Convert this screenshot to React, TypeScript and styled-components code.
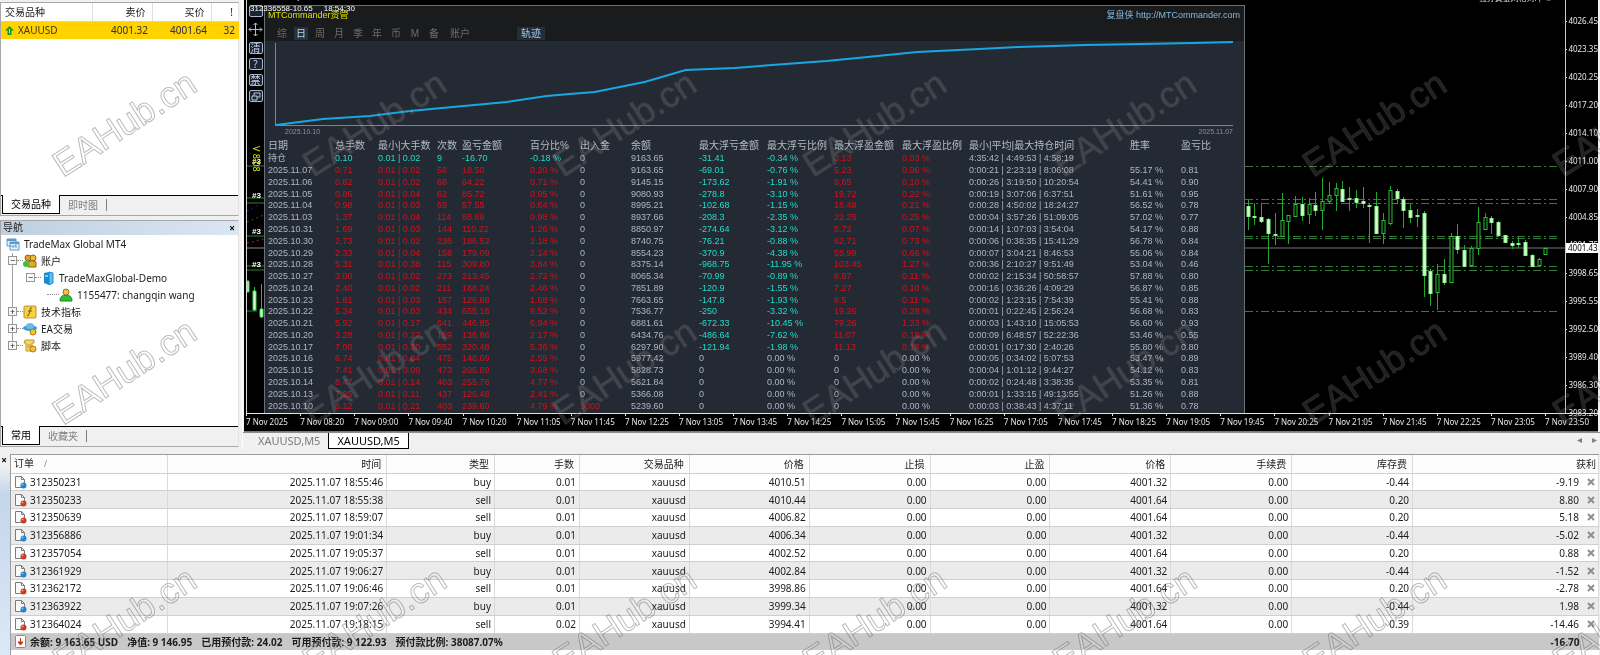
import { ReactNode } from "react";
import styled, { createGlobalStyle } from "styled-components";

type Tone = "gray" | "cyan" | "red";

const statHeaders = [
  "日期",
  "总手数",
  "最小|大手数",
  "次数",
  "盈亏金额",
  "百分比%",
  "出入金",
  "余额",
  "最大浮亏金额",
  "最大浮亏比例",
  "最大浮盈金额",
  "最大浮盈比例",
  "最小|平均|最大持仓时间",
  "胜率",
  "盈亏比",
];

const statWidths = [67, 43, 59, 25, 68, 50, 51, 68, 68, 67, 68, 67, 161, 51, 63];

// date, lots, max lot, count, profit, percent, deposit, balance, dd, dd%, up, up%, times, win rate, ratio
const statRows: string[][] = [
  ["持仓", "0.10", "0.02", "9", "-16.70", "-0.18", "0", "9163.65", "-31.41", "-0.34", "3.13", "0.03", "4:35:42 | 4:49:53 | 4:58:19", "", ""],
  ["2025.11.07", "0.71", "0.02", "58", "18.50", "0.20", "0", "9163.65", "-69.01", "-0.76", "5.23", "0.06", "0:00:21 | 2:23:19 | 8:06:08", "55.17 %", "0.81"],
  ["2025.11.06", "0.82", "0.02", "68", "64.22", "0.71", "0", "9145.15", "-173.62", "-1.91", "8.65", "0.10", "0:00:26 | 3:19:50 | 10:20:54", "54.41 %", "0.90"],
  ["2025.11.05", "0.86", "0.04", "62", "85.72", "0.95", "0", "9080.93", "-278.8", "-3.10", "19.72", "0.22", "0:00:19 | 3:07:06 | 6:37:51", "51.61 %", "0.95"],
  ["2025.11.04", "0.98", "0.03", "69", "57.55", "0.64", "0", "8995.21", "-102.68", "-1.15", "18.48", "0.21", "0:00:28 | 4:50:02 | 18:24:27", "56.52 %", "0.78"],
  ["2025.11.03", "1.37", "0.04", "114", "86.69", "0.98", "0", "8937.66", "-208.3", "-2.35", "22.25", "0.25", "0:00:04 | 3:57:26 | 51:09:05", "57.02 %", "0.77"],
  ["2025.10.31", "1.69", "0.03", "144", "110.22", "1.26", "0", "8850.97", "-274.64", "-3.12", "5.72", "0.07", "0:00:14 | 1:07:03 | 3:54:04", "54.17 %", "0.88"],
  ["2025.10.30", "2.73", "0.02", "236", "186.52", "2.18", "0", "8740.75", "-76.21", "-0.88", "62.71", "0.73", "0:00:06 | 0:38:35 | 15:41:29", "56.78 %", "0.84"],
  ["2025.10.29", "2.33", "0.04", "158", "179.09", "2.14", "0", "8554.23", "-370.9", "-4.38", "55.99", "0.66", "0:00:07 | 3:04:21 | 8:46:53", "55.06 %", "0.84"],
  ["2025.10.28", "5.31", "0.38", "115", "309.80", "3.84", "0", "8375.14", "-968.75", "-11.95", "103.45", "1.27", "0:00:36 | 2:10:27 | 9:51:49", "53.04 %", "0.46"],
  ["2025.10.27", "3.00", "0.02", "273", "213.45", "2.72", "0", "8065.34", "-70.99", "-0.89", "8.87", "0.11", "0:00:02 | 2:15:34 | 50:58:57", "57.88 %", "0.80"],
  ["2025.10.24", "2.40", "0.02", "211", "188.24", "2.46", "0", "7851.89", "-120.9", "-1.55", "7.27", "0.10", "0:00:16 | 0:36:26 | 4:09:29", "56.87 %", "0.85"],
  ["2025.10.23", "1.81", "0.03", "157", "126.88", "1.68", "0", "7663.65", "-147.8", "-1.93", "8.5", "0.11", "0:00:02 | 1:23:15 | 7:54:39", "55.41 %", "0.88"],
  ["2025.10.22", "5.34", "0.03", "434", "655.16", "9.52", "0", "7536.77", "-250", "-3.32", "19.26", "0.28", "0:00:01 | 0:22:45 | 2:56:24", "56.68 %", "0.83"],
  ["2025.10.21", "5.92", "0.17", "641", "446.85", "6.94", "0", "6881.61", "-672.33", "-10.45", "79.26", "1.23", "0:00:03 | 1:43:10 | 15:05:53", "56.60 %", "0.93"],
  ["2025.10.20", "3.28", "0.27", "159", "136.86", "2.17", "0", "6434.76", "-486.64", "-7.62", "11.07", "0.18", "0:00:09 | 6:48:57 | 52:22:36", "53.46 %", "0.55"],
  ["2025.10.17", "7.00", "0.30", "552", "320.48", "5.36", "0", "6297.90", "-121.94", "-1.98", "11.13", "0.18", "0:00:01 | 0:17:30 | 2:40:26", "55.80 %", "0.80"],
  ["2025.10.16", "6.74", "0.04", "475", "148.69", "2.55", "0", "5977.42", "0", "0.00", "0", "0.00", "0:00:05 | 0:34:02 | 5:07:53", "53.47 %", "0.89"],
  ["2025.10.15", "7.41", "0.09", "473", "206.89", "3.68", "0", "5828.73", "0", "0.00", "0", "0.00", "0:00:04 | 1:01:12 | 9:44:27", "54.12 %", "0.83"],
  ["2025.10.14", "8.47", "0.14", "463", "255.76", "4.77", "0", "5621.84", "0", "0.00", "0", "0.00", "0:00:02 | 0:24:48 | 3:38:35", "53.35 %", "0.81"],
  ["2025.10.13", "7.25", "0.11", "437", "126.48", "2.41", "0", "5366.08", "0", "0.00", "0", "0.00", "0:00:01 | 1:33:15 | 49:13:55", "51.26 %", "0.88"],
  ["2025.10.10", "6.12", "0.21", "403", "239.60", "4.79", "5000", "5239.60", "0", "0.00", "0", "0.00", "0:00:03 | 0:38:43 | 4:37:11", "51.36 %", "0.78"],
];

const formatStat = (value: string, col: number) => {
  if (col === 2) return `0.01 | ${value}`;
  if (col === 5 || col === 9 || col === 11) return `${value} %`;
  return value;
};

const statTone = (value: string, col: number, row: number): Tone => {
  if (col >= 1 && col <= 5) return row === 0 ? "cyan" : "red";
  if (col === 6) return value === "0" ? "gray" : "red";
  if (col === 8 || col === 9) return Number(value) < 0 ? "cyan" : "gray";
  if (col === 10 || col === 11) return Number(value) > 0 ? "red" : "gray";
  return "gray";
};

const orderHeaders = ["订单", "时间", "类型", "手数", "交易品种", "价格", "止损", "止盈", "价格", "手续费", "库存费", "获利"];
const orderWidths = [157, 219, 108, 85, 110, 120, 121, 120, 121, 121, 121, 186];

const orders = [
  { id: "312350231", time: "2025.11.07 18:55:46", type: "buy", lots: "0.01", open: "4010.51", price: "4001.32", swap: "-0.44", profit: "-9.19" },
  { id: "312350233", time: "2025.11.07 18:55:38", type: "sell", lots: "0.01", open: "4010.44", price: "4001.64", swap: "0.20", profit: "8.80" },
  { id: "312350639", time: "2025.11.07 18:59:07", type: "sell", lots: "0.01", open: "4006.82", price: "4001.64", swap: "0.20", profit: "5.18" },
  { id: "312356886", time: "2025.11.07 19:01:34", type: "buy", lots: "0.01", open: "4006.34", price: "4001.32", swap: "-0.44", profit: "-5.02" },
  { id: "312357054", time: "2025.11.07 19:05:37", type: "sell", lots: "0.01", open: "4002.52", price: "4001.64", swap: "0.20", profit: "0.88" },
  { id: "312361929", time: "2025.11.07 19:06:27", type: "buy", lots: "0.01", open: "4002.84", price: "4001.32", swap: "-0.44", profit: "-1.52" },
  { id: "312362172", time: "2025.11.07 19:06:46", type: "sell", lots: "0.01", open: "3998.86", price: "4001.64", swap: "0.20", profit: "-2.78" },
  { id: "312363922", time: "2025.11.07 19:07:26", type: "buy", lots: "0.01", open: "3999.34", price: "4001.32", swap: "-0.44", profit: "1.98" },
  { id: "312364024", time: "2025.11.07 19:18:15", type: "sell", lots: "0.02", open: "3994.41", price: "4001.64", swap: "0.39", profit: "-14.46" },
];

const priceLabels = [
  "4026.45", "4023.35", "4020.25", "4017.20", "4014.10", "4011.00", "4007.90", "4004.85",
  "4001.75", "3998.65", "3995.55", "3992.50", "3989.40", "3986.30", "3983.20",
];

const timeLabels = [
  "2025", "08:20", "09:00", "09:40", "10:20", "11:05", "11:45", "12:25", "13:05", "13:45", "14:25", "15:05", "15:45",
  "16:25", "17:05", "17:45", "18:25", "19:05", "19:45", "20:25", "21:05", "21:45", "22:25", "23:05", "23:50",
];

// high, low, body top, body bottom (thirds of a pixel), 1 = falling candle
const candles = [
  [210, 300, 228, 257, 1], [220, 285, 258, 261, 1], [218, 280, 260, 273, 1], [265, 402, 266, 308, 1],
  [250, 345, 312, 316, 1], [190, 320, 270, 318, 0], [255, 342, 256, 275, 0], [198, 262, 222, 257, 0],
  [200, 272, 221, 253, 1], [205, 282, 222, 253, 0], [187, 258, 225, 240, 1], [145, 300, 213, 241, 0],
  [155, 222, 195, 212, 0], [160, 242, 175, 197, 0], [153, 215, 176, 213, 1], [170, 242, 205, 209, 1],
  [180, 233, 205, 216, 1], [170, 233, 214, 221, 1], [220, 338, 226, 230, 1], [187, 310, 228, 308, 1],
  [248, 342, 270, 308, 0], [168, 285, 180, 278, 0], [178, 222, 184, 206, 1], [200, 293, 207, 239, 1],
  [222, 278, 240, 261, 1], [237, 290, 254, 257, 1], [242, 502, 250, 437, 1], [418, 528, 424, 491, 1],
  [402, 540, 433, 487, 0], [388, 465, 432, 456, 1], [310, 460, 319, 456, 0], [282, 372, 318, 358, 1],
  [345, 410, 360, 407, 1], [348, 412, 354, 404, 0], [232, 375, 277, 354, 0], [248, 300, 262, 298, 0],
  [258, 312, 263, 275, 1], [272, 322, 275, 314, 1], [314, 338, 316, 336, 1], [332, 358, 338, 344, 1],
  [322, 355, 340, 343, 1], [330, 378, 336, 374, 1], [372, 410, 374, 407, 1], [385, 412, 386, 405, 0],
  [350, 372, 353, 371, 0],
];

const levels = [166, 199, 203, 236, 238, 266, 270, 311];

const GlobalStyle = createGlobalStyle`
  * {
    box-sizing: border-box;
  }
  body {
    margin: 0;
    background: #f0f0f0;
    font-family: "Noto Sans", "Noto Sans CJK SC", sans-serif;
    font-size: 10px;
    line-height: 12px;
    color: #1c1c1c;
    overflow-x: hidden;
  }
  button {
    font: inherit;
    color: inherit;
    border: 0;
    padding: 0;
    margin: 0;
    background: none;
    white-space: nowrap;
  }
  table {
    border-collapse: collapse;
    border-spacing: 0;
  }
`;

// The fill shows on dark areas only, the outline on light areas only
function Watermark({ outline }: { outline?: boolean }) {
  const id = outline ? "mark-outline" : "mark-fill";
  return (
    <WatermarkLayer aria-hidden="true" $outline={outline}>
      <defs>
        <pattern id={id} width="250" height="248" patternUnits="userSpaceOnUse">
          <text
            transform="translate(63 178) rotate(-33)"
            fontFamily="Liberation Sans, sans-serif"
            fontSize="36"
            fill={outline ? "none" : "#ffffff"}
            fillOpacity="0.12"
            stroke={outline ? "#bcbcbc" : "#ffffff"}
            strokeOpacity={outline ? 1 : 0.12}
            strokeWidth="1"
          >
            EAHub.cn
          </text>
        </pattern>
      </defs>
      <rect width="100%" height="100%" fill={`url(#${id})`} />
    </WatermarkLayer>
  );
}

function TreeItem({ depth, toggle, icon, children }: { depth: number; toggle?: string; icon: ReactNode; children: ReactNode }) {
  return (
    <StyledTreeItem $depth={depth}>
      {toggle && <TreeToggle aria-label={toggle === "+" ? "展开" : "折叠"}>{toggle}</TreeToggle>}
      {depth > 0 && <TreeDash $long={!toggle} />}
      <svg width="14" height="14" viewBox="0 0 14 14">{icon}</svg>
      <span>{children}</span>
    </StyledTreeItem>
  );
}

function MarketWatch() {
  return (
    <MarketPanel>
      <MarketTable>
        <colgroup>
          <col style={{ width: 91 }} />
          <col style={{ width: 60 }} />
          <col style={{ width: 59 }} />
          <col style={{ width: 28 }} />
        </colgroup>
        <thead>
          <tr>
            <th>交易品种</th>
            <th>卖价</th>
            <th>买价</th>
            <th>!</th>
          </tr>
        </thead>
        <tbody>
          <tr>
            <td>
              <SymbolCell>
                <svg width="9" height="9" viewBox="0 0 9 9">
                  <path d="M4.5 0 9 4.500H6.500V9h-4V4.500H0Z" fill="#159a2c" />
                  <path d="M4.500 3v4" stroke="#b8f0a8" fill="none" />
                </svg>
                XAUUSD
              </SymbolCell>
            </td>
            <td>4001.32</td>
            <td>4001.64</td>
            <td>32</td>
          </tr>
        </tbody>
      </MarketTable>
      <PanelSpace />
      <TabBar>
        <PanelTab $active>交易品种</PanelTab>
        <PanelTab>即时图</PanelTab>
      </TabBar>
    </MarketPanel>
  );
}

function Navigator() {
  return (
    <NavPanel>
      <NavTitle>
        导航
        <CloseButton aria-label="关闭">×</CloseButton>
      </NavTitle>
      <Tree>
        <TreeItem
          depth={0}
          icon={
            <>
              <path d="M1 2h9v7H1zM4 5h9v8H4z" fill="#e8f3fc" stroke="#5b9bd0" />
              <path d="M1 3h9M4 6h9" stroke="#5b9bd0" strokeWidth="2" />
              <path d="M6 10h2M9 10h2" stroke="#5b9bd0" />
            </>
          }
        >
          TradeMax Global MT4
        </TreeItem>
        <TreeItem
          depth={1}
          toggle="−"
          icon={
            <>
              <circle cx="5" cy="4" r="3" fill="#e0a020" stroke="#8a6410" />
              <circle cx="10" cy="4" r="3" fill="#f0b838" stroke="#8a6410" />
              <path d="M5 13V8q4-3 8 0v5z" fill="#e0a828" stroke="#8a6410" />
              <circle cx="3" cy="10" r="3" fill="#38c048" />
            </>
          }
        >
          账户
        </TreeItem>
        <TreeItem
          depth={2}
          toggle="−"
          icon={
            <>
              <path d="M3 2l5-1v13l-5-2z" fill="#1e88d0" />
              <path d="M8 1l4 1v10l-4 2z" fill="#5cc0f0" stroke="#1e88d0" />
              <path d="M4 5h3" stroke="#fff" />
            </>
          }
        >
          TradeMaxGlobal-Demo
        </TreeItem>
        <TreeItem
          depth={3}
          icon={
            <>
              <path d="M1 13q0-6 6-6t6 6z" fill="#2cc030" stroke="#128a18" />
              <circle cx="7" cy="4" r="3" fill="#f0c060" stroke="#a86a18" />
            </>
          }
        >
          1155477: changqin wang
        </TreeItem>
        <TreeItem
          depth={1}
          toggle="+"
          icon={
            <>
              <rect x="1" y="1" width="12" height="12" rx="1" fill="#f6cf4a" stroke="#c09020" />
              <path d="M9 3q-2-1-2 2l-1 4q0 2-2 2M5 6h4" stroke="#7a5810" fill="none" />
            </>
          }
        >
          技术指标
        </TreeItem>
        <TreeItem
          depth={1}
          toggle="+"
          icon={
            <>
              <ellipse cx="7" cy="6" rx="7" ry="3" fill="#3c9ad8" />
              <ellipse cx="7" cy="4" rx="4" ry="3" fill="#68bcec" />
              <circle cx="10" cy="10" r="3" fill="#f0c040" stroke="#a87c10" />
            </>
          }
        >
          EA交易
        </TreeItem>
        <TreeItem
          depth={1}
          toggle="+"
          icon={
            <>
              <path d="M2 1h9v3H9v8H3V4H1z" fill="#f6d468" stroke="#c09828" />
              <path d="M4 6h4M4 8h4" stroke="#c09828" />
              <circle cx="10" cy="10" r="3" fill="#f0c040" stroke="#a87c10" />
            </>
          }
        >
          脚本
        </TreeItem>
      </Tree>
      <TabBar>
        <PanelTab $active>常用</PanelTab>
        <PanelTab>收藏夹</PanelTab>
      </TabBar>
    </NavPanel>
  );
}

function ToolStrip() {
  return (
    <Strip>
      <StripChart viewBox="0 0 17 414">
        <path d="M0 166h17M0 198h17M0 203h17M0 236h17M0 266h17M0 270h17M0 311h10" stroke="#2f7f35" />
        <path d="M0 248h17" stroke="#8c8c92" />
        <path d="M0 222l17-7M0 243l17-4" stroke="#a02040" strokeDasharray="2 3" />
        <path d="M0 211l17-9" stroke="#2020a0" strokeDasharray="2 3" />
        <path d="M7.5 287v24M14.5 284v34" stroke="#20c030" />
        <path d="M0 281h2v11H0zM6 291h3v19H6zM13 309h3v8h-3z" fill="#d8ffd8" stroke="#38e048" />
        <g fill="#ffffff" fontFamily="Liberation Sans, sans-serif" fontSize="8" fontWeight="700">
          <text x="5" y="164">#3</text>
          <text x="5" y="198">#3</text>
          <text x="5" y="234">#3</text>
          <text x="5" y="267">#3</text>
        </g>
      </StripChart>
      <ToolButton aria-label="最小化" />
      <MoveButton aria-label="移动">
        <svg width="15" height="15" viewBox="0 0 15 15">
          <path d="M7.5 1v13M1 7.5h13M5.5 3l2-2 2 2M5.5 12l2 2 2-2M3 5.5l-2 2 2 2M12 5.5l2 2-2 2" stroke="#b4bcc8" fill="none" />
        </svg>
      </MoveButton>
      <ToolButton>清</ToolButton>
      <ToolButton>?</ToolButton>
      <ToolButton>禁</ToolButton>
      <ToolButton aria-label="还原">
        <svg width="10" height="9" viewBox="0 0 10 9">
          <path d="M1 4h5v4H1zM3 4V1h6v4H6" stroke="#b8c8e0" fill="none" />
        </svg>
      </ToolButton>
      <Version>V 8.08</Version>
    </Strip>
  );
}

function StatsPanel() {
  return (
    <StatsWindow>
      <StatsHeader>
        <StatsTitle>
          <Brand>MTCommander资管</Brand>
          <SiteLink href="http://MTCommander.com">复盘侠 http://MTCommander.com</SiteLink>
        </StatsTitle>
        <StatsMenu>
          {["综", "日", "周", "月", "季", "年", "币", "M", "备"].map((name) => (
            <MenuButton key={name} $active={name === "日"}>{name}</MenuButton>
          ))}
          <MenuButton $wide>账户</MenuButton>
          <TraceButton>轨迹</TraceButton>
        </StatsMenu>
      </StatsHeader>
      <CurveChart viewBox="0 0 980 86" preserveAspectRatio="none">
        <path d="M10.5 2v83M10 84.500h959" stroke="#80868e" fill="none" />
        <path
          d="M11 84 58 78 105 75 145 70 188 66 242 61 282 55 305 53 330 51 380 41 421 29 470 27 521 23 562 20 603 16 653 11 715 8 755 6 821 4 878 3 929 2 969 1"
          stroke="#16a8e4"
          strokeWidth="2"
          fill="none"
        />
      </CurveChart>
      <CurveDates>
        <span>2025.10.10</span>
        <span>2025.11.07</span>
      </CurveDates>
      <StatsTable>
        <colgroup>
          {statWidths.map((w, i) => (
            <col key={i} style={{ width: `${(w / 976) * 100}%` }} />
          ))}
        </colgroup>
        <thead>
          <tr>
            {statHeaders.map((h) => (
              <th key={h}>{h}</th>
            ))}
          </tr>
        </thead>
        <tbody>
          {statRows.map((row, r) => (
            <tr key={row[0]}>
              {row.map((value, c) => (
                <StatCell key={c} $tone={statTone(value, c, r)}>
                  {formatStat(value, c)}
                </StatCell>
              ))}
            </tr>
          ))}
        </tbody>
      </StatsTable>
    </StatsWindow>
  );
}

function CandleChart() {
  return (
    <CandleWrapper>
      <AdvisorName>强分黄金网格对冲 ☺</AdvisorName>
      <svg width="320" height="414" viewBox="0 0 320 414">
        {levels.map((y) => (
          <path key={y} d={`M0 ${y}.5h315`} stroke="#3a7a3c" strokeDasharray="8 3 2 3" />
        ))}
        <path d="M0 248h320" stroke="#77777c" />
        {candles.map(([high, low, top, bottom, falling], i) => {
          const x = Math.round(2.7 + i * 6.766);
          const y = 130 + Math.round(top / 3);
          const h = Math.max(1, Math.round((bottom - top) / 3));
          return (
            <g key={i}>
              <path d={`M${x + 0.5} ${130 + Math.round(high / 3)}V${130 + Math.round(low / 3)}`} stroke="#22a82c" />
              <rect
                x={x - 1}
                y={y + 0.5}
                width="3"
                height={h}
                fill={falling ? "#d0ffc8" : "#000000"}
                stroke={falling ? "#8cf48c" : "#2cc038"}
              />
            </g>
          );
        })}
      </svg>
    </CandleWrapper>
  );
}

function OrderIcon({ type }: { type: string }) {
  const color = type === "buy" ? "#1e86d0" : "#cc3a22";
  return (
    <svg width="13" height="14" viewBox="0 0 13 14">
      <path d="M1.500 1.500h6l3 3v8h-9z" fill="#fbfbfb" stroke="#7c7c7c" />
      <path d="M7.500 1.500v3h3" fill="none" stroke="#7c7c7c" />
      <circle cx="9.500" cy="10.500" r="3" fill={color} />
      <circle cx="8.500" cy="9.500" r="1" fill="#ffffff" fillOpacity="0.5" />
    </svg>
  );
}

function Terminal() {
  return (
    <TerminalSection>
      <TerminalSide>
        <CloseButton aria-label="关闭">×</CloseButton>
      </TerminalSide>
      <TerminalBody>
        <OrdersTable>
          <colgroup>
            {orderWidths.map((w, i) => (
              <col key={i} style={{ width: `${(w / 1589) * 100}%` }} />
            ))}
          </colgroup>
          <thead>
            <tr>
              {orderHeaders.map((h, i) => (
                <th key={i}>
                  {h}
                  {i === 0 && <SortMark>/</SortMark>}
                </th>
              ))}
            </tr>
          </thead>
          <tbody>
            {orders.map((o) => (
              <tr key={o.id}>
                <td>
                  <OrderCell>
                    <OrderIcon type={o.type} />
                    {o.id}
                  </OrderCell>
                </td>
                <td>{o.time}</td>
                <td>{o.type}</td>
                <td>{o.lots}</td>
                <td>xauusd</td>
                <td>{o.open}</td>
                <td>0.00</td>
                <td>0.00</td>
                <td>{o.price}</td>
                <td>0.00</td>
                <td>{o.swap}</td>
                <td>
                  <ProfitCell>
                    {o.profit}
                    <OrderClose aria-label={`平仓 ${o.id}`}>
                      <svg width="8" height="8" viewBox="0 0 8 8">
                        <path d="M1 1l6 6M7 1L1 7" stroke="#8e8e8e" strokeWidth="2" />
                      </svg>
                    </OrderClose>
                  </ProfitCell>
                </td>
              </tr>
            ))}
          </tbody>
          <tfoot>
            <tr>
              <td colSpan={11}>
                <OrderCell>
                  <svg width="13" height="13" viewBox="0 0 13 13">
                    <rect x="1.500" y="0.500" width="10" height="12" rx="1" fill="#ffffff" stroke="#8a8a8a" />
                    <path d="M6.500 3v7M4 7l2.500 3L9 7z" stroke="#c83018" fill="#c83018" />
                  </svg>
                  <SummaryText>
                    <span>余额: 9 163.65 USD</span>
                    <span>净值: 9 146.95</span>
                    <span>已用预付款: 24.02</span>
                    <span>可用预付款: 9 122.93</span>
                    <span>预付款比例: 38087.07%</span>
                  </SummaryText>
                </OrderCell>
              </td>
              <td>
                <ProfitTotal>-16.70</ProfitTotal>
              </td>
            </tr>
          </tfoot>
        </OrdersTable>
      </TerminalBody>
    </TerminalSection>
  );
}

export default function App() {
  return (
    <>
      <GlobalStyle />
      <Page>
        <Upper>
          <SideColumn>
            <MarketWatch />
            <Navigator />
          </SideColumn>
          <ChartColumn>
            <ChartWindow>
              <ChartCaption>XAUUSD,M5</ChartCaption>
              <OrderTag>
                <span>312336558-10.65</span>
                <span>18:54:30</span>
              </OrderTag>
              <PlotRow>
                <ToolStrip />
                <StatsPanel />
                <CandleChart />
                <PriceAxis>
                  {priceLabels.map((p) => (
                    <PriceLabel key={p}>{p}</PriceLabel>
                  ))}
                  <BidTag>4001.43</BidTag>
                </PriceAxis>
              </PlotRow>
              <TimeAxis>
                {timeLabels.map((t) => (
                  <TimeLabel key={t}>7 Nov {t}</TimeLabel>
                ))}
              </TimeAxis>
            </ChartWindow>
            <ChartTabs>
              <ChartTab>XAUUSD,M5</ChartTab>
              <ChartTab $active>XAUUSD,M5</ChartTab>
              <TabArrows>
                <button aria-label="向左">◂</button>
                <button aria-label="向右">▸</button>
              </TabArrows>
            </ChartTabs>
          </ChartColumn>
        </Upper>
        <Terminal />
        <Watermark />
        <Watermark outline />
      </Page>
    </>
  );
}

// Page frame
const Page = styled.div`
  position: relative;
  display: flex;
  flex-direction: column;
  min-height: 100vh;
  overflow: hidden;
  background: #f0f0f0;
`;

const Upper = styled.div`
  display: flex;
  height: 449px;
`;

const WatermarkLayer = styled.svg<{ $outline?: boolean }>`
  position: absolute;
  inset: 0;
  width: 100%;
  height: 100%;
  pointer-events: none;
  mix-blend-mode: ${({ $outline }) => ($outline ? "multiply" : "normal")};
`;

// Left column
const SideColumn = styled.div`
  display: flex;
  flex-direction: column;
  gap: 4px;
  width: 243px;
  flex-shrink: 0;
  padding: 2px 3px 2px 0;
  border-right: 1px solid #ffffff;
`;

const MarketPanel = styled.div`
  display: flex;
  flex-direction: column;
  height: 214px;
  border: 1px solid #a8a8a8;
  border-right-color: #e4e4e4;
  background: #ffffff;
`;

const NavPanel = styled(MarketPanel)`
  flex: 1;
`;

const MarketTable = styled.table`
  table-layout: fixed;
  width: 100%;
  th,
  td {
    height: 18px;
    padding: 0 6px 0 0;
    font-weight: 400;
    text-align: right;
  }
  th {
    border-right: 1px solid #dedede;
    border-bottom: 1px solid #d0d0d0;
  }
  th:first-child,
  td:first-child {
    padding-left: 4px;
    text-align: left;
  }
  th:last-child {
    border-right: 0;
  }
  td {
    color: #2c2c50;
    background: #ffd200;
    padding-right: 4px;
  }
`;

const SymbolCell = styled.div`
  display: flex;
  align-items: center;
  gap: 4px;
  color: #403820;
`;

const PanelSpace = styled.div`
  flex: 1;
`;

const TabBar = styled.div`
  display: flex;
  align-items: center;
  height: 20px;
  padding: 0 0 1px 1px;
  background: #f0f0f0;
  border-top: 1px solid #000000;
`;

const PanelTab = styled.button<{ $active?: boolean }>`
  height: 19px;
  margin-top: -1px;
  padding: 0 8px;
  color: ${({ $active }) => ($active ? "#000000" : "#808080")};
  background: ${({ $active }) => ($active ? "#ffffff" : "transparent")};
  border: ${({ $active }) => ($active ? "1px solid #000000" : "0")};
  border-top: 0;
  & + & {
    height: 12px;
    border-right: 1px solid #808080;
  }
`;

const NavTitle = styled.div`
  display: flex;
  justify-content: space-between;
  height: 14px;
  padding: 0 2px;
  background: linear-gradient(90deg, #bfcfdf, #dbe6f3);
`;

const CloseButton = styled.button`
  width: 8px;
  font-weight: 700;
  color: #000000;
`;

const Tree = styled.ul`
  flex: 1;
  margin: 0;
  padding: 0;
  list-style: none;
  background: linear-gradient(#a0a0a0, #a0a0a0) 11px 18px / 1px 88px no-repeat;
`;

const StyledTreeItem = styled.li<{ $depth: number }>`
  display: flex;
  align-items: center;
  height: 17px;
  padding-left: ${({ $depth }) => [5, 7, 25, 46][$depth]}px;
  span {
    margin-left: 4px;
  }
`;

const TreeToggle = styled.button`
  width: 9px;
  height: 9px;
  border: 1px solid #969696;
  background: #f8f8f8;
  font-size: 9px;
  line-height: 7px;
`;

const TreeDash = styled.i<{ $long: boolean }>`
  width: ${({ $long }) => ($long ? 12 : 6)}px;
  border-top: 1px dotted #8c8c8c;
`;

// Chart window
const ChartColumn = styled.div`
  display: flex;
  flex-direction: column;
  flex: 1;
  min-width: 0;
`;

const ChartWindow = styled.div`
  position: relative;
  margin: 0 2px 0 1px;
  padding-left: 2px;
  background: #000000;
  border-bottom: 1px solid #7a7a7a;
  overflow: hidden;
`;

const ChartCaption = styled.div`
  position: absolute;
  top: -10px;
  left: 14px;
  color: #ffffff;
`;

const OrderTag = styled.div`
  position: absolute;
  top: 3px;
  left: 6px;
  z-index: 1;
  display: flex;
  gap: 11px;
  font-family: "Liberation Sans", sans-serif;
  font-size: 8px;
  color: #ffffff;
`;

const PlotRow = styled.div`
  display: flex;
  height: 414px;
  border-left: 1px solid #d8d8d8;
  border-bottom: 1px solid #e4e4e4;
`;

const Strip = styled.div`
  position: relative;
  display: flex;
  flex-direction: column;
  align-items: center;
  gap: 4px;
  width: 17px;
  padding-top: 5px;
  flex-shrink: 0;
`;

const StripChart = styled.svg`
  position: absolute;
  inset: 0;
  width: 17px;
  height: 414px;
`;

const ToolButton = styled.button`
  position: relative;
  display: flex;
  align-items: center;
  justify-content: center;
  width: 14px;
  height: 12px;
  border: 1px solid #a8b8d0;
  border-radius: 2px;
  background: #1c2430;
  color: #c4d4ec;
  font-size: 10px;
  line-height: 10px;
`;

const MoveButton = styled.button`
  position: relative;
  width: 15px;
  height: 17px;
  line-height: 0;
`;

const Version = styled.div`
  position: relative;
  margin-top: 40px;
  writing-mode: vertical-rl;
  font-size: 9px;
  color: #e8e800;
`;

// Statistics window
const StatsWindow = styled.section`
  display: flex;
  flex-direction: column;
  flex: 1;
  min-width: 0;
  margin-top: 5px;
  border: 1px solid #6a7078;
  border-bottom: 0;
  background: #242a33;
  font-family: "Liberation Sans", "Noto Sans CJK SC", sans-serif;
  font-size: 9px;
  color: #a4aebc;
`;

const StatsHeader = styled.header`
  height: 35px;
  padding: 3px 4px 0 3px;
  background: #1a1b1c;
`;

const StatsTitle = styled.div`
  display: flex;
  justify-content: space-between;
`;

const Brand = styled.span`
  color: #e0e000;
`;

const SiteLink = styled.a`
  color: #84b8dc;
  text-decoration: none;
`;

const StatsMenu = styled.nav`
  display: flex;
  gap: 5px;
  margin-top: 6px;
  padding-left: 7px;
`;

const MenuButton = styled.button<{ $active?: boolean; $wide?: boolean }>`
  width: ${({ $wide }) => ($wide ? 28 : 14)}px;
  height: 13px;
  font-size: 10px;
  line-height: 12px;
  color: ${({ $active }) => ($active ? "#b4d4ee" : "#6c6c6c")};
  background: ${({ $active }) => ($active ? "#28323e" : "transparent")};
`;

const TraceButton = styled(MenuButton)`
  width: 28px;
  margin-left: 38px;
  color: #a8c8e4;
  background: #242e3a;
`;

const CurveChart = styled.svg`
  width: 100%;
  height: 86px;
  flex-shrink: 0;
`;

const CurveDates = styled.div`
  display: flex;
  justify-content: space-between;
  height: 10px;
  padding: 0 11px 0 20px;
  font-size: 7px;
  line-height: 10px;
  color: #8a929c;
`;

const StatsTable = styled.table`
  table-layout: fixed;
  width: calc(100% - 3px);
  margin-left: 3px;
  height: 275px;
  th,
  td {
    padding: 0;
    text-align: left;
    white-space: nowrap;
    line-height: 11px;
  }
  th {
    height: 16px;
    font-size: 10px;
    font-weight: 400;
    color: #b4bcc8;
  }
`;

const tones: Record<Tone, string> = {
  gray: "#acb6c4",
  cyan: "#20dccc",
  red: "#d4101c",
};

const StatCell = styled.td<{ $tone: Tone }>`
  color: ${({ $tone }) => tones[$tone]};
`;

const CandleWrapper = styled.div`
  width: 320px;
  flex-shrink: 0;
  overflow: hidden;
  svg {
    display: block;
  }
`;

const AdvisorName = styled.div`
  height: 12px;
  margin: -8px 12px -4px;
  text-align: right;
  font-size: 8px;
  color: #d8d8d8;
`;

const PriceAxis = styled.div`
  position: relative;
  width: 33px;
  flex-shrink: 0;
  padding-top: 16px;
  border-left: 1px solid #c8c8c8;
  font-size: 8px;
  line-height: 10px;
  color: #e8e8e8;
`;

const PriceLabel = styled.div`
  display: flex;
  align-items: flex-start;
  gap: 1px;
  height: 28px;
  &::before {
    content: "";
    width: 2px;
    margin-top: 5px;
    border-top: 1px solid #d8d8d8;
  }
`;

const BidTag = styled.div`
  position: absolute;
  top: 243px;
  left: 0;
  right: 0;
  padding-left: 2px;
  background: #ffffff;
  color: #000000;
`;

const TimeAxis = styled.div`
  display: grid;
  grid-template-columns: repeat(24, 1fr) 53px;
  height: 17px;
  font-size: 8px;
  line-height: 12px;
  color: #e8e8e8;
`;

const TimeLabel = styled.span`
  white-space: nowrap;
  &::before {
    content: "";
    display: block;
    width: 1px;
    height: 2px;
    background: #e8e8e8;
  }
`;

const ChartTabs = styled.div`
  display: flex;
  align-items: flex-start;
  flex: 1;
  padding-left: 1px;
  border-top: 1px solid #8c8c8c;
`;

const ChartTab = styled.button<{ $active?: boolean }>`
  height: 16px;
  padding: 0 8px 0 ${({ $active }) => ($active ? 8 : 14)}px;
  color: ${({ $active }) => ($active ? "#000000" : "#7c7c7c")};
  background: ${({ $active }) => ($active ? "#ffffff" : "transparent")};
  border: ${({ $active }) => ($active ? "1px solid #000000" : "0")};
  border-top: 0;
  font-size: 11px;
`;

const TabArrows = styled.div`
  display: flex;
  gap: 10px;
  margin-left: auto;
  padding-right: 3px;
  color: #808080;
`;

// Terminal
const TerminalSection = styled.section`
  display: flex;
  flex: 1;
  padding-top: 5px;
`;

const TerminalSide = styled.div`
  width: 10px;
  flex-shrink: 0;
  background: linear-gradient(#f0f0f0 12px, #c4d6ec 40px, #dce8f6);
`;

const TerminalBody = styled.div`
  flex: 1;
  min-width: 0;
  margin-right: 1px;
  border-top: 1px solid #9c9c9c;
  border-left: 1px solid #9c9c9c;
  background: #ffffff;
`;

const OrdersTable = styled.table`
  table-layout: fixed;
  width: 100%;
  height: 195px;
  line-height: 14px;
  th,
  td {
    height: 17px;
    padding: 0 3px;
    font-weight: 400;
    text-align: right;
    white-space: nowrap;
    border-right: 1px solid #dadada;
    border-bottom: 1px solid #cfcfcf;
  }
  th {
    height: 18px;
    padding-right: 5px;
    background: #fcfcfc;
  }
  th:last-child {
    padding-right: 2px;
  }
  th:first-child,
  td:first-child {
    text-align: left;
  }
  tbody tr:nth-child(even) {
    background: #ebebeb;
  }
  tfoot td {
    border: 0;
    background: #c8c8c8;
    font-weight: 700;
  }
`;

const SortMark = styled.span`
  margin-left: 10px;
  font-size: 8px;
  color: #808080;
`;

const OrderCell = styled.div`
  display: flex;
  align-items: center;
  gap: 3px;
`;

const ProfitCell = styled.div`
  display: flex;
  align-items: center;
  justify-content: flex-end;
  gap: 8px;
`;

const ProfitTotal = styled.div`
  padding-right: 16px;
`;

const OrderClose = styled.button`
  width: 8px;
  height: 8px;
  line-height: 0;
`;

const SummaryText = styled.div`
  display: flex;
  gap: 9px;
`;
